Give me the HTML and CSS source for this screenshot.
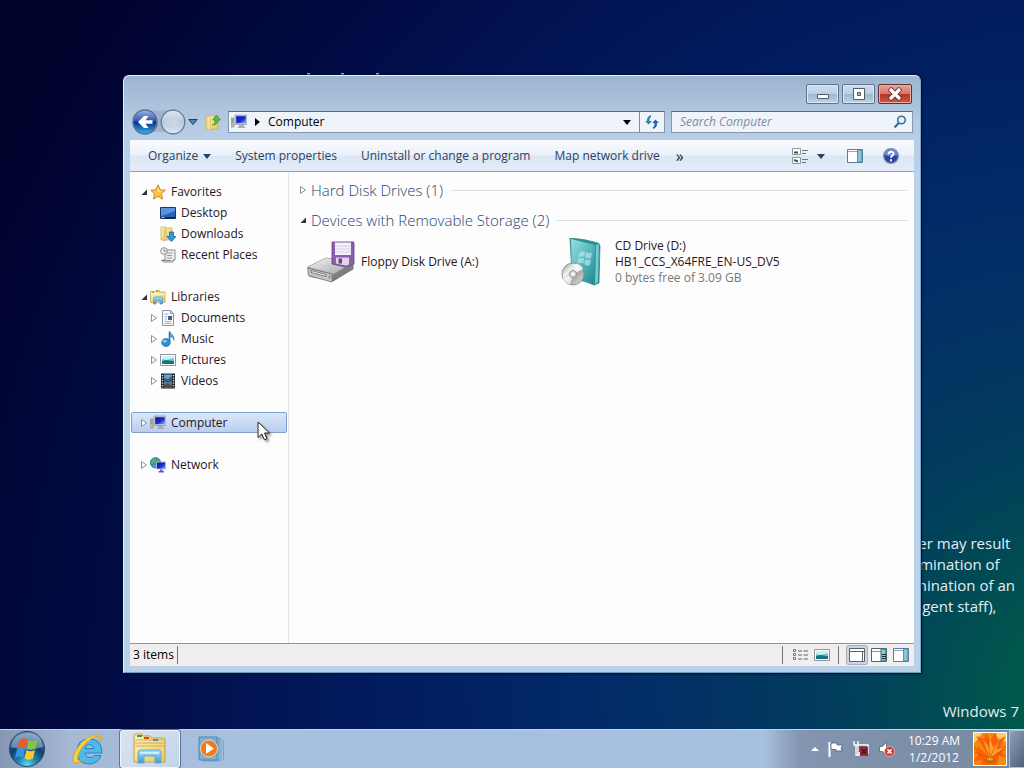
FILE: index.html
```html
<!DOCTYPE html>
<html lang="en">
<head>
    <meta charset="UTF-8">
    <meta name="viewport" content="width=device-width, initial-scale=1.0">
    <title>Computer</title>
    <link rel="stylesheet" href="styles.css">
</head>
<body>
    <!-- shared icons and gradients -->
    <svg class="sprite" aria-hidden="true">
        <defs>
            <linearGradient id="gScreen" x1="0" y1="0" x2="1" y2="1">
                <stop offset="0" stop-color="#0a12a8"/>
                <stop offset="0.55" stop-color="#1a2bd0"/>
                <stop offset="1" stop-color="#8fb0ff"/>
            </linearGradient>
            <linearGradient id="gFolder" x1="0" y1="0" x2="1" y2="1">
                <stop offset="0" stop-color="#fff6c0"/>
                <stop offset="1" stop-color="#e8c760"/>
            </linearGradient>
            <linearGradient id="gBlue" x1="0" y1="0" x2="0" y2="1">
                <stop offset="0" stop-color="#a8e0fa"/>
                <stop offset="1" stop-color="#3c9bd6"/>
            </linearGradient>
        </defs>
        <symbol id="i-open" viewBox="0 0 8 8"><path d="M7 1.500v5.500H1.500z" fill="#333"/></symbol>
        <symbol id="i-closed" viewBox="0 0 8 8"><path d="M1.500 .5v7L6.500 4z" fill="#fff" stroke="#8f8f8f"/></symbol>
        <symbol id="i-down" viewBox="0 0 8 8"><path d="M0 2h8L4 7z" fill="currentColor"/></symbol>
        <symbol id="i-computer" viewBox="0 0 16 16">
            <path d="M0 4h3v9H0z" fill="#b9bcae" stroke="#84887c" stroke-width=".6"/>
            <path d="M.8 6h1.400M.8 8h1.400" stroke="#5d8f50"/>
            <path d="M4 1h12v9.500H4z" fill="#c9cbd8" stroke="#8f93a8" stroke-width=".7"/>
            <path d="M5.200 2.200h9.600v7H5.200z" fill="url(#gScreen)"/>
            <path d="M8 11h5v1.500l2 1.500H6l2-1.500z" fill="#a9adba"/>
        </symbol>
        <symbol id="i-star" viewBox="0 0 16 16">
            <path d="M8 .8l2.100 5 5.200.4-4 3.500 1.300 5.400L8 12.200l-4.600 2.900 1.300-5.400-4-3.500 5.200-.4z" fill="#ffc93c" stroke="#c97b1c" stroke-width=".9" stroke-linejoin="round"/>
            <path d="M8 3l1.300 3.700 3.300.4-4.600 1z" fill="#fff0a8"/>
        </symbol>
        <symbol id="i-desktop" viewBox="0 0 16 16">
            <path d="M.5 2.500h15v11H.5z" fill="#2d62b8" stroke="#1c3767"/>
            <path d="M1 3h14v3L1 11z" fill="#5c94dc"/>
            <path d="M1 12h14v1.500H1z" fill="#102349"/>
            <path d="M1.500 12h3v1h-3z" fill="#7fd2d8"/>
        </symbol>
        <symbol id="i-downloads" viewBox="0 0 16 16">
            <path d="M1 1h5l1 1h5v12H1z" fill="url(#gFolder)" stroke="#cfae50" stroke-width=".8"/>
            <path d="M6 2v12l-2 1.500V3z" fill="#f1d884" stroke="#c7a444" stroke-width=".5"/>
            <path d="M9.500 6h4v4.500H16L11.500 15.500 7 10.500h2.500z" fill="#2e9ae0" stroke="#17649f" stroke-width=".8"/>
        </symbol>
        <symbol id="i-recent" viewBox="0 0 16 16">
            <path d="M5 3h10v10h-2v2H3.500l-1-2H5z" fill="#eee" stroke="#8b8b8b"/>
            <path d="M7 6h6M7 8.500h5M7 11h5" stroke="#9b9b9b"/>
            <path d="M1 13.500h10" stroke="#888"/>
            <circle cx="4" cy="4" r="3.300" fill="#f6f6f6" stroke="#8b8b8b"/>
            <path d="M4 2v2.200h2" fill="none" stroke="#666" stroke-width=".8"/>
        </symbol>
        <symbol id="i-libraries" viewBox="0 0 16 16">
            <path d="M.5 2.500h4l1-1h4v1.500h5.500v10.500H.5z" fill="url(#gFolder)" stroke="#c4a54e" stroke-width=".8"/>
            <path d="M1 5h14" stroke="#fffbe0"/>
            <path d="M6 2.200h2" stroke="#d84b30"/><path d="M2 3.200h2" stroke="#3aa24c"/>
            <path d="M3.500 15V9.500q0-1.500 1.500-1.500h6q1.500 0 1.500 1.500V15H10v-3.500H6V15z" fill="url(#gBlue)" stroke="#4a96c4" stroke-width=".7"/>
        </symbol>
        <symbol id="i-document" viewBox="0 0 16 16">
            <path d="M2.500.5h8l3 3v12h-11z" fill="#fbfbfb" stroke="#8c96a0"/>
            <path d="M10.500.5v3h3" fill="none" stroke="#8c96a0"/>
            <path d="M4.500 4h4M4.500 6.500h2.500M4.500 9h2.500M4.500 11.500h7M4.500 13.500h7" stroke="#96a5b4" stroke-width=".9"/>
            <path d="M8 6h4v4H8z" fill="#45608a"/>
        </symbol>
        <symbol id="i-music" viewBox="0 0 16 16">
            <path d="M9.500 1v10.500" stroke="#2473b5" stroke-width="1.600"/>
            <path d="M9.500 0c.5 3 5.500 4 4.500 9.500-.4-2.500-2-3.500-4.500-4z" fill="#4fa6dc" stroke="#2876ae" stroke-width=".5"/>
            <ellipse cx="6" cy="11.500" rx="4.400" ry="4" fill="#2f8fd4" stroke="#1d649c" stroke-width=".6"/>
            <ellipse cx="4.800" cy="10.300" rx="2" ry="1.300" fill="#8fcff2"/>
        </symbol>
        <symbol id="i-picture" viewBox="0 0 16 16">
            <path d="M.5 2.500h15v11H.5z" fill="#fff" stroke="#8b979e"/>
            <path d="M2 4h12v8H2z" fill="#7cc8e0"/>
            <path d="M2 4h12v2L6 8 2 7z" fill="#c9f0f2"/>
            <path d="M2 9l4-1 8 1v3H2z" fill="#157d74"/>
            <path d="M2 10.500h12V12H2z" fill="#1a6792"/>
        </symbol>
        <symbol id="i-video" viewBox="0 0 16 16">
            <path d="M1 .5h14v15H1z" fill="#1d2530"/>
            <path d="M4 1.500h8v6H4z" fill="#5fa3d6"/><path d="M4 8.500h8v6H4z" fill="#3d86c4"/>
            <path d="M4 5l4 1 4-3v4.500H4z" fill="#66533c"/><path d="M4 12l4-2 4 3v1.500H4z" fill="#5e4b33"/>
            <path d="M2.500 2v13M13.500 2v13" stroke="#dfe6ea" stroke-width="1.300" stroke-dasharray="1.300 1.200"/>
        </symbol>
        <symbol id="i-network" viewBox="0 0 16 16">
            <circle cx="5.500" cy="5.800" r="5.200" fill="#2c8fc4" stroke="#1c5f8c" stroke-width=".6"/>
            <path d="M3 1.500l4 .5-1 3-4 2-1-2zM2 8l4 0v3zM8 1.500l2 3-3 1z" fill="#52b858"/>
            <path d="M6.500 5h9v7h-9z" fill="url(#gScreen)" stroke="#b6bccc" stroke-width=".9"/>
            <path d="M10 12.500h2.500V14H14v1.500H8.500V14H10z" fill="#5666b0"/>
        </symbol>
        <symbol id="i-preview" viewBox="0 0 16 14">
            <path d="M.5.500h15v13H.5z" fill="#fff" stroke="#5c7f9a"/>
            <path d="M1 2.500h14" stroke="#94a9b8"/>
            <path d="M10.500 1h4.500v12h-4.500z" fill="#87c5dc" stroke="#4c7e98" stroke-width=".8"/>
        </symbol>
    </svg>

    <main class="desktop">
        <div class="glyph-tops"></div>
        <p class="watermark">ter may result<br>rmination of<br>mination of an<br>ngent staff),</p>
        <p class="edition">Windows 7</p>

        <section class="window">
            <header class="titlebar">
                <button class="caption" aria-label="Minimize"><svg width="14" height="12" viewBox="0 0 14 12"><path d="M1.500 6.500h11v4h-11z" fill="#fff" stroke="#4d5a70"/></svg></button>
                <button class="caption" aria-label="Restore"><svg width="14" height="12" viewBox="0 0 14 12"><path d="M1.500.5h11v11h-11z" fill="#fff" stroke="#4d5a70"/><path d="M5.500 4.500h3v3h-3z" fill="#a9bdd3" stroke="#4d5a70"/></svg></button>
                <button class="caption close" aria-label="Close"><svg width="16" height="14" viewBox="0 0 16 14"><path d="M2.500 1.500l11 11M13.500 1.500l-11 11" stroke="#5f3038" stroke-width="5"/><path d="M3 2l10 10M13 2l-10 10" stroke="#fff" stroke-width="3.200"/></svg></button>
            </header>

            <nav class="navbar">
                <div class="history">
                    <button aria-label="Back and forward">
                        <svg width="54" height="28" viewBox="0 0 54 28">
                            <defs>
                                <linearGradient id="gBack" x1="0" y1="0" x2="0" y2="1">
                                    <stop offset="0" stop-color="#9fb8e4"/><stop offset=".45" stop-color="#3157ae"/>
                                    <stop offset=".5" stop-color="#0b2c86"/><stop offset="1" stop-color="#37b6ec"/>
                                </linearGradient>
                                <linearGradient id="gFwd" x1="0" y1="0" x2="0" y2="1">
                                    <stop offset="0" stop-color="#dfe8f2"/><stop offset=".5" stop-color="#b9c9dc"/><stop offset="1" stop-color="#dce8f4"/>
                                </linearGradient>
                            </defs>
                            <path d="M13 1.500Q27 4 42 1.500v24Q27 21 13 26.500z" fill="#94aac6" opacity=".7"/>
                            <circle cx="13" cy="14" r="12" fill="url(#gBack)" stroke="#5c7299" stroke-width="1.500"/>
                            <path d="M20.500 12.300h-7l3-4.300h-4.500l-6 6 6 6h4.500l-3-4.300h7z" fill="#fff"/>
                            <circle cx="41" cy="14" r="11.800" fill="url(#gFwd)" stroke="#66788f" stroke-width="1.300"/>
                            <path d="M34 12.300h7l-3-4h4l6 5.700-6 5.700h-4l3-4h-7z" fill="#c9d5e3"/>
                        </svg>
                    </button>
                    <button class="recent" aria-label="Recent pages"><svg width="10" height="8" viewBox="0 0 10 8"><path d="M.8 1.500h8.400L5 6.500z" fill="#4f8ac4" stroke="#173d6e"/></svg></button>
                    <button class="up" aria-label="Up one level">
                        <svg width="16" height="18" viewBox="0 0 16 18">
                            <path d="M1 3l5-1 1 1h6v13H1z" fill="url(#gFolder)" stroke="#ceb052" stroke-width=".8"/>
                            <path d="M5.500 3v14l-3.500-1V3z" fill="#f7e391" stroke="#cdb04e" stroke-width=".5"/>
                            <path d="M7.500 12q3-1 2.500-5H7.500l4-5 4 5H13q0 5-5.500 5z" fill="#55bd3c" stroke="#36912c" stroke-width=".7"/>
                        </svg>
                    </button>
                </div>
                <div class="address">
                    <svg width="16" height="16"><use href="#i-computer"/></svg>
                    <svg width="5" height="8" viewBox="0 0 5 8"><path d="M0 0v8l5-4z"/></svg>
                    <span>Computer</span>
                    <button aria-label="Previous locations"><svg width="8" height="8"><use href="#i-down"/></svg></button>
                    <button class="refresh" aria-label="Refresh">
                        <svg width="14" height="14" viewBox="0 0 14 14"><path d="M6 0v2Q4 3 4.500 6H7L3.500 9.500 0 6h2Q1.500 1.500 6 0z" fill="#2b86ad"/><path d="M8 14v-2q2-1 1.500-4H7l3.500-3.500L14 8h-2q.5 4.500-4 6z" fill="#2b62a6"/></svg>
                    </button>
                </div>
                <div class="search">
                    <input type="text" placeholder="Search Computer" aria-label="Search Computer">
                    <svg width="14" height="14" viewBox="0 0 14 14"><circle cx="8.500" cy="5" r="3.800" fill="#e7f3fc" stroke="#3c729c" stroke-width="1.600"/><path d="M5.700 8L1.500 12.500" stroke="#3c6f94" stroke-width="2.300"/></svg>
                </div>
            </nav>

            <div class="toolbar">
                <button>Organize <svg width="8" height="8"><use href="#i-down"/></svg></button>
                <button>System properties</button>
                <button>Uninstall or change a program</button>
                <button>Map network drive</button>
                <button class="more">»</button>
                <button class="views" aria-label="Change your view">
                    <svg width="16" height="16" viewBox="0 0 16 16"><path d="M.5.500h8v6h-8zM.5 9.500h8v6h-8z" fill="#fff" stroke="#8a9b98"/><path d="M2 4.500h4M2 12l4 1.500" stroke="#2a6555" stroke-width="2"/><path d="M10 2.500h6M10 5.500h4M10 11.500h6M10 14.500h4" stroke="#68788a"/></svg>
                    <svg width="8" height="8"><use href="#i-down"/></svg>
                </button>
                <button aria-label="Show the preview pane"><svg width="16" height="14"><use href="#i-preview"/></svg></button>
                <button aria-label="Get help"><svg width="16" height="16" viewBox="0 0 16 16"><circle cx="8" cy="8" r="7.300" fill="#2b46a4" stroke="#7c8bb4" stroke-width="1.400"/><path d="M1.800 7a6.200 6.200 0 0 1 12.400 0Q8 9 1.800 7z" fill="#6f8bd8"/><path d="M5.600 6.200C5.600 3 10.500 3 10.500 5.800 10.500 7.600 8 7.600 8 9.700M8 11.200v2" fill="none" stroke="#fff" stroke-width="1.900"/></svg></button>
            </div>

            <div class="explorer">
                <aside class="sidebar">
                    <div class="group">
                        <a href="#"><svg class="tri"><use href="#i-open"/></svg><svg class="icon"><use href="#i-star"/></svg>Favorites</a>
                        <a href="#" class="child"><svg class="tri"></svg><svg class="icon"><use href="#i-desktop"/></svg>Desktop</a>
                        <a href="#" class="child"><svg class="tri"></svg><svg class="icon"><use href="#i-downloads"/></svg>Downloads</a>
                        <a href="#" class="child"><svg class="tri"></svg><svg class="icon"><use href="#i-recent"/></svg>Recent Places</a>
                    </div>
                    <div class="group">
                        <a href="#"><svg class="tri"><use href="#i-open"/></svg><svg class="icon"><use href="#i-libraries"/></svg>Libraries</a>
                        <a href="#" class="child"><svg class="tri"><use href="#i-closed"/></svg><svg class="icon"><use href="#i-document"/></svg>Documents</a>
                        <a href="#" class="child"><svg class="tri"><use href="#i-closed"/></svg><svg class="icon"><use href="#i-music"/></svg>Music</a>
                        <a href="#" class="child"><svg class="tri"><use href="#i-closed"/></svg><svg class="icon"><use href="#i-picture"/></svg>Pictures</a>
                        <a href="#" class="child"><svg class="tri"><use href="#i-closed"/></svg><svg class="icon"><use href="#i-video"/></svg>Videos</a>
                    </div>
                    <div class="group">
                        <a href="#" class="selected"><svg class="tri"><use href="#i-closed"/></svg><svg class="icon"><use href="#i-computer"/></svg>Computer</a>
                    </div>
                    <div class="group">
                        <a href="#"><svg class="tri"><use href="#i-closed"/></svg><svg class="icon"><use href="#i-network"/></svg>Network</a>
                    </div>
                </aside>

                <div class="content">
                    <h2><svg class="tri"><use href="#i-closed"/></svg>Hard Disk Drives (1)</h2>
                    <h2><svg class="tri"><use href="#i-open"/></svg>Devices with Removable Storage (2)</h2>
                    <div class="drives">
                        <a href="#" class="drive">
                            <svg width="48" height="48" viewBox="0 0 48 48">
                                <defs>
                                    <linearGradient id="gMetal" x1="0" y1="0" x2="1" y2="1"><stop offset="0" stop-color="#f4f4f4"/><stop offset="1" stop-color="#a2a2a2"/></linearGradient>
                                </defs>
                                <path d="M1 29L19 20 46 25v6L26 43 2 38z" fill="#8a8a8a" stroke="#666" stroke-width=".8"/>
                                <path d="M1 29L19 20l27 5-20 11z" fill="url(#gMetal)"/>
                                <path d="M1 30l24 6v8L3 38q-2-1-2-3z" fill="#c6c6c6" stroke="#707070" stroke-width=".8"/>
                                <path d="M4 32.500l15 4v2L4 34.500z" fill="#efefef" stroke="#555" stroke-width=".7"/>
                                <path d="M22.500 37.500v3" stroke="#47b34f" stroke-width="1.600"/>
                                <path d="M25 4h21q1 0 1 1v21l-8 3-14-3z" fill="#8d5eae" stroke="#5f3d80" stroke-width=".8"/>
                                <path d="M28 4.500h16V17H28z" fill="#f3f1fb"/>
                                <path d="M28 8h16M28 11h16M28 14h16" stroke="#c8c4de" stroke-width=".8"/>
                                <path d="M29 19.500h13v7l-3 1-10-2z" fill="#dcd6e8"/>
                                <path d="M31.500 20.500h3.500v5h-3.500z" fill="#68458a"/>
                                <path d="M38 29l8-3v5L26 43.500v-5z" fill="#777" opacity=".6"/>
                            </svg>
                            <span>Floppy Disk Drive (A:)</span>
                        </a>
                        <a href="#" class="drive">
                            <svg width="48" height="48" viewBox="0 0 48 48">
                                <defs>
                                    <linearGradient id="gCase" x1="0" y1="0" x2="1" y2="1"><stop offset="0" stop-color="#9cdde0"/><stop offset=".5" stop-color="#58b9bf"/><stop offset="1" stop-color="#22858d"/></linearGradient>
                                    <linearGradient id="gDisc" x1="0" y1="0" x2="1" y2="1"><stop offset="0" stop-color="#8e8e8e"/><stop offset=".35" stop-color="#f4f4f4"/><stop offset=".6" stop-color="#aaa"/><stop offset="1" stop-color="#e6e6e6"/></linearGradient>
                                </defs>
                                <path d="M9 0q15 1 28 5 2 1 2 3l-1 37-5 2-22-9z" fill="#2b9097" stroke="#287c82" stroke-width=".7"/>
                                <path d="M10 1l24 6-1 39-22-5z" fill="url(#gCase)"/>
                                <path d="M35 7l3-1-1 38-3 2z" fill="#78c9ce"/>
                                <path d="M18 15q3-3 6-1l-.5 5q-3-1.500-6 .5zM25 14q3 2 6 0l-1 6q-3 1.500-5.500-.5zM17 21q3-2 6-.5l-.5 5q-3-1.500-6 .5zM24 21q3 2 6 0l-1 6q-3 1.500-5.500-.5z" fill="#b9edf0" opacity=".65"/>
                                <circle cx="12" cy="36" r="11" fill="url(#gDisc)" stroke="#858585" stroke-width=".8"/>
                                <path d="M12 36l3-10.500q5 1 7 5.500z" fill="#fff" opacity=".8"/><path d="M12 36l-3 10.500q-5-2-7-5.500z" fill="#fff" opacity=".7"/>
                                <circle cx="12" cy="36" r="3.500" fill="#d5d5d5" stroke="#8a8a8a" stroke-width=".8"/><circle cx="12" cy="36" r="1.500" fill="#fff"/>
                            </svg>
                            <span>CD Drive (D:)<br>HB1_CCS_X64FRE_EN-US_DV5<br><small>0 bytes free of 3.09 GB</small></span>
                        </a>
                    </div>
                </div>
            </div>

            <footer class="statusbar">
                <span class="count">3 items</span>
                <div class="modes">
                    <button aria-label="Details"><svg width="16" height="12" viewBox="0 0 16 12"><path d="M1.500.5h2v2h-2zM1.500 4.500h2v2h-2zM1.500 8.500h2v2h-2z" fill="#fff" stroke="#777"/><path d="M6 2h4M11.500 2H16M6 6h4M11.500 6H16M6 10h4M11.500 10H16" stroke="#666"/></svg></button>
                    <button aria-label="Large icons"><svg width="16" height="16"><use href="#i-picture"/></svg></button>
                </div>
                <div class="panes">
                    <button class="pressed" aria-label="Plain pane"><svg width="16" height="14" viewBox="0 0 16 14"><path d="M.5.500h15v13H.5z" fill="#fff" stroke="#526574"/><path d="M1 3.500h14M13.500 3.500V13" stroke="#526574"/></svg></button>
                    <button aria-label="Details pane"><svg width="16" height="14" viewBox="0 0 16 14"><path d="M.5.500h15v13H.5z" fill="#fff" stroke="#526574"/><path d="M1 3.500h9" stroke="#8798a4"/><path d="M10 1h5v12h-5z" fill="#7ed0c8" stroke="#3d6a70"/><path d="M11 6.500h4M11 8.500h4M11 10.500h4" stroke="#173038"/></svg></button>
                    <button aria-label="Preview pane"><svg width="16" height="14"><use href="#i-preview"/></svg></button>
                </div>
            </footer>
        </section>

        <svg class="cursor" width="14" height="21" viewBox="0 0 14 21"><path d="M1 1v15.500l3.800-3.600 2.600 6 2.600-1.200-2.500-5.700h5z" fill="#fff" stroke="#222"/></svg>
    </main>

    <footer class="taskbar">
        <button class="start" aria-label="Start">
            <svg width="38" height="38" viewBox="0 0 38 38">
                <defs>
                    <radialGradient id="gOrb" cx=".5" cy=".95" r=".95"><stop offset="0" stop-color="#55e0f4"/><stop offset=".3" stop-color="#1b7fae"/><stop offset=".6" stop-color="#123e6c"/><stop offset="1" stop-color="#6b8fb4"/></radialGradient>
                </defs>
                <circle cx="19" cy="19" r="17.500" fill="url(#gOrb)" stroke="#29486b"/>
                <path d="M3 17Q5 4 19 3t16 14Q19 22 3 17z" fill="#c3d8ea" opacity=".45"/>
                <path d="M11.500 10q4-3 8-.5l-2 8.500q-3.500-2-8 0z" fill="#ee5a24"/>
                <path d="M20.500 10q4 2.500 9 0l-2 8.500q-4.500 2.500-8.500 0z" fill="#8ac43f"/>
                <path d="M9 19.500q4.500-2.500 8-.5l-2 8.500q-3.500-2-8 .5z" fill="#3a93e0"/>
                <path d="M18.500 20q4 2.500 8.500 0l-2 8.500q-4.500 2.500-8.500 0z" fill="#fcc92f"/>
            </svg>
        </button>
        <button class="task" aria-label="Internet Explorer">
            <svg width="34" height="34" viewBox="0 0 34 34">
                <path d="M31 21H14q.5 4.500 5 4.500 3 0 4.500-2h6.500Q27 32 18.500 32 6 32 6 19.500 6 7 18.500 7 31 7 31 21zM14 16.500h9q-.5-4-4.500-4t-4.500 4z" fill="#4db9ec" stroke="#1f7db8" stroke-width=".9"/>
                <path d="M10 12q3-3.500 8-3.500" fill="none" stroke="#c4edfc" stroke-width="1.500"/>
                <path d="M31 9Q32 1 23 3 11 7 4 20 0 30 4 31q3 .5 8-3-5 2-5.500-1Q7 19 16 10 26 2 29 5q1 1 0 4z" fill="#f7d13c" stroke="#cf9c1e" stroke-width=".7"/>
            </svg>
        </button>
        <button class="task active" aria-label="Computer">
            <svg width="34" height="32" viewBox="0 0 34 32">
                <path d="M1 3q0-2 2-2h6l1 2h7q1 0 1 2h13q1 0 1 1v23H1z" fill="url(#gFolder)" stroke="#bfa04a"/>
                <path d="M2 7h30M2 10h30M2 13h30" stroke="#cdae55"/>
                <path d="M4 3h5" stroke="#3a9a3c" stroke-width="2"/><path d="M11 5h5" stroke="#d8402c" stroke-width="2"/><path d="M20 7h5" stroke="#5b8dbd" stroke-width="2"/>
                <path d="M5 30V20q0-3 3-3h17q3 0 3 3v10h-6v-7H11v7z" fill="url(#gBlue)" stroke="#68a9cc"/>
                <path d="M7 20h19" stroke="#e2f7ff" stroke-width="1.500"/>
            </svg>
        </button>
        <button class="task" aria-label="Windows Media Player">
            <svg width="28" height="26" viewBox="0 0 28 26">
                <path d="M5 3h18v22H5z" fill="#a6cbe4" stroke="#6f9fc3"/><path d="M3 2h18v22H3z" fill="#8dbddd" stroke="#5f95bd"/><path d="M1 1h18v23H1z" fill="#79b0d6" stroke="#4f89b5"/><path d="M25.500 4v20" stroke="#7ca6c7"/>
                <circle cx="11" cy="12.500" r="8.500" fill="#ef7a20" stroke="#f8d2ae" stroke-width="1"/>
                <path d="M8 7v11l8-5.500z" fill="#fff"/>
            </svg>
        </button>
        <div class="tray">
            <button aria-label="Show hidden icons"><svg width="8" height="6" viewBox="0 0 8 6"><path d="M0 5h8L4 1z" fill="#fff"/></svg></button>
            <button aria-label="Action Center"><svg width="16" height="16" viewBox="0 0 16 16"><path d="M1.500 1v15" stroke="#fff" stroke-width="2"/><path d="M3 2h6v2h6l-2 3 1 3H8V8.500H3z" fill="#fff" stroke="#4b5c73" stroke-width=".8"/></svg></button>
            <button aria-label="Network"><svg width="17" height="16" viewBox="0 0 17 16"><path d="M5 4h10v8H5z" fill="#516078" stroke="#fff" stroke-width="1.300"/><path d="M1 0v4h4V0M3 4v10h8" fill="none" stroke="#fff" stroke-width="1.300"/><path d="M7 6h8v9H7z" fill="#a9232a"/><path d="M8.500 8l5 5M13.500 8l-5 5" stroke="#46131c" stroke-width="1.600"/></svg></button>
            <button aria-label="Volume"><svg width="16" height="16" viewBox="0 0 16 16"><path d="M.5 5.500h3L7.500 1v13L3.500 10.500h-3z" fill="#fff" stroke="#56667c" stroke-width=".8"/><circle cx="10.500" cy="10.500" r="5" fill="#d9382e" stroke="#fbd7d3" stroke-width=".6"/><path d="M8.500 8.500l4 4M12.500 8.500l-4 4" stroke="#fff" stroke-width="1.700"/></svg></button>
        </div>
        <time class="clock">10:29 AM<br>1/2/2012</time>
        <svg class="avatar" width="34" height="34" viewBox="0 0 34 34">
            <path d="M0 0h34v34H0z" fill="#f38a12"/>
            <path d="M0 0h10L4 8 0 12zM20 0h14v9l-5 1z" fill="#f9cf74"/>
            <path d="M17 26L3 4l8 3 2-7 4 8 6-8 1 9 9-5-6 11 7-1-5 6 5 5-8-1-2 9H9l-1-5-8 2 5-7-5-9 6 3z" fill="#fb5f08"/>
            <path d="M17 26L10 8l6 7 1-10 3 11 6-9-3 11 9-3-8 6z" fill="#ffa12c"/>
            <path d="M17 26L5 15M17 26L1 20M17 26l-2-20M17 26l8-18M17 26l14-8" stroke="#d84c03" stroke-width=".7"/>
            <ellipse cx="17" cy="28" rx="5" ry="3" fill="#b5690a"/><ellipse cx="17" cy="27" rx="3" ry="1.500" fill="#e3a718"/>
            <path d="M.5.500h33v33H.5z" fill="none" stroke="#fff"/>
        </svg>
        <button class="show-desktop" aria-label="Show desktop"></button>
    </footer>
</body>
</html>
```
FILE: styles.css
```css
* {
    box-sizing: border-box;
}

body, html {
    margin: 0;
    height: 100%;
}

body {
    display: flex;
    flex-direction: column;
    overflow: hidden;
    font-family: "Open Sans", "Noto Sans", sans-serif;
    font-size: 12px;
    line-height: 16px;
    background: radial-gradient(circle at 106% 90%, #006545 0%, #005050 9%, #023c5e 20%, #022c68 36%, #011c60 54%, #010d48 74%, #01022c 94%);
}

button {
    display: flex;
    align-items: center;
    padding: 0;
    border: none;
    background: none;
    font: inherit;
    color: inherit;
}

a {
    color: inherit;
    text-decoration: none;
}

svg {
    display: block;
    flex: none;
}

.sprite {
    position: absolute;
    width: 0;
    height: 0;
}

.desktop {
    position: relative;
    flex: 1;
}

.watermark, .edition {
    position: absolute;
    margin: 0;
    color: #e4eef4;
    font-size: 15px;
    line-height: 21px;
    white-space: nowrap;
}

.watermark {
    right: 12px;
    bottom: 112px;
    width: 99px;
}

.edition {
    right: 5px;
    bottom: 7px;
}

/* ascenders of the desktop text that show above the window */
.glyph-tops {
    position: absolute;
    left: 307px;
    top: 73px;
    width: 3px;
    height: 2px;
    background: #dde;
    box-shadow: 34px 0 #dde, 69px 0 #dde;
}

/* window */
.window {
    position: absolute;
    inset: 75px 103px 56px 123px;
    display: flex;
    flex-direction: column;
    padding: 0 6px 6px;
    border: 1px solid #e6f1fb;
    border-right-color: #7ba6c8;
    border-bottom-color: #6d9dc0;
    border-radius: 6px 6px 0 0;
    background: linear-gradient(#9cb5cf, #b6cce4 50px, #b9d1ea 90px, #b8d1e9);
    box-shadow: 0 0 2px 1px #000c2c;
}

.titlebar {
    display: flex;
    justify-content: flex-end;
    gap: 3px;
    height: 32px;
    padding: 8px 2px 0;
}

.caption {
    justify-content: center;
    width: 33px;
    height: 20px;
    border: 1px solid #5c7390;
    border-radius: 2px;
    background: linear-gradient(#d0deed, #bccfe3 48%, #9db6d0 50%, #bed2e7);
    box-shadow: inset 0 0 0 1px #dbe7f3;
}

.close {
    width: 34px;
    border-color: #642c38;
    background: linear-gradient(#e4a497, #d3776a 48%, #b83325 50%, #cc5a45);
    box-shadow: inset 0 0 0 1px #e6b0a6;
}

.navbar {
    display: flex;
    align-items: center;
    height: 28px;
}

.history {
    display: flex;
    align-items: center;
    width: 98px;
    padding-left: 2px;
}

.recent {
    margin-left: 2px;
}

.up {
    margin-left: 7px;
}

.address, .search {
    display: flex;
    align-items: center;
    height: 22px;
    border: 1px solid #8798ae;
    border-top-color: #5d6c84;
    background: #eff4fb;
}

.address {
    flex: 1;
    gap: 8px;
    padding-left: 2px;
}

.address span {
    flex: 1;
}

.address .refresh {
    justify-content: center;
    width: 25px;
    height: 20px;
    border-left: 1px solid #7a8ba4;
}

.search {
    width: 242px;
    margin: 0 1px 0 6px;
    padding: 0 5px 0 8px;
}

.search input {
    flex: 1;
    min-width: 0;
    padding: 0;
    border: none;
    outline: none;
    background: none;
    font: inherit;
    font-style: italic;
}

.search input::placeholder {
    color: #83899a;
    opacity: 1;
}

.toolbar {
    display: flex;
    align-items: center;
    gap: 24px;
    height: 32px;
    margin-top: 4px;
    padding: 0 15px 0 18px;
    border-bottom: 1px solid #8e9fb8;
    background: linear-gradient(#fafcfe, #eaf1fa 48%, #dde7f4 52%, #e3ecf8);
    color: #2e3e60;
    white-space: nowrap;
}

.toolbar button {
    gap: 5px;
}

.toolbar .more {
    margin-left: -8px;
    font-size: 16px;
    color: #222;
}

.toolbar .views {
    gap: 9px;
    margin: 0 -2px 0 auto;
}

.toolbar button:last-child {
    margin-left: -4px;
}

/* explorer panes */
.explorer {
    flex: 1;
    display: flex;
    min-height: 0;
    background: #fdfdfd;
}

.sidebar {
    display: flex;
    flex-direction: column;
    gap: 21px;
    width: 159px;
    padding: 9px 1px 0;
    border-right: 1px solid #dfe6f0;
    color: #26161f;
}

.group a {
    display: flex;
    align-items: center;
    height: 21px;
    padding-left: 8px;
    border: 1px solid transparent;
    border-radius: 2px;
}

.group .child {
    padding-left: 18px;
}

.group .selected {
    border-color: #7fa0cc;
    background: linear-gradient(#dbe7f8, #b9cfef);
}

.tri {
    width: 8px;
    height: 8px;
}

.icon {
    width: 16px;
    height: 16px;
    margin: 0 5px 0 2px;
}

.content {
    flex: 1;
    padding: 3px 7px 0 10px;
}

.content h2 {
    display: flex;
    align-items: center;
    height: 30px;
    margin: 0;
    color: #2c3f76;
    font-size: 15px;
    font-weight: 300;
}

.content h2::after {
    content: "";
    flex: 1;
    height: 1px;
    margin-left: 8px;
    background: #dcdfe4;
}

.content .tri {
    margin-right: 4px;
}

.drives {
    display: grid;
    grid-template-columns: 254px 1fr;
    padding: 3px 8px;
}

.drive {
    display: flex;
    align-items: center;
    gap: 6px;
    color: #2a1622;
}

.drive small {
    font-size: 12px;
    color: #777;
}

.statusbar {
    display: flex;
    align-items: center;
    height: 23px;
    border-top: 1px solid #8f9296;
    background: #f0eeee;
}

.count {
    padding: 1px 3px;
    border-right: 1px solid #777;
}

.modes, .panes {
    display: flex;
    align-items: center;
    height: 18px;
    border-left: 1px solid #777;
}

.modes {
    gap: 6px;
    margin-left: auto;
    padding: 0 8px 0 9px;
}

.panes {
    gap: 2px;
    padding: 0 3px 0 8px;
}

.panes button {
    padding: 2px;
}

.panes .pressed {
    border-radius: 2px;
    background: #d0d4dd;
    box-shadow: 0 0 0 1px #a9aeb8;
}

.cursor {
    position: absolute;
    left: 257px;
    top: 421px;
    filter: drop-shadow(2px 2px 1px rgba(0, 0, 0, 0.4));
}

/* taskbar */
.taskbar {
    display: flex;
    align-items: center;
    height: 39px;
    border-top: 1px solid #c6d4e5;
    background: linear-gradient(to right, #8597b2 0, #a5b9d4 70px, #a8c0df 240px, #a8c0df calc(100% - 260px), #8395b0 calc(100% - 225px), #76899f);
}

.start {
    padding: 0 7px 0 8px;
}

.task {
    justify-content: center;
    width: 60px;
    height: 38px;
    margin-left: 2px;
}

.task.active {
    border: 1px solid #eef5fc;
    border-radius: 3px;
    background: linear-gradient(135deg, #d9e4f1, #c3d4e9);
    box-shadow: 0 0 0 1px #5d7595;
}

.start + .task {
    margin-left: 5px;
}

.tray {
    display: flex;
    align-items: center;
    gap: 9px;
    margin-left: auto;
}

.clock {
    width: 78px;
    text-align: center;
    color: #fff;
    font-size: 12px;
    line-height: 17px;
}

.avatar {
    margin-right: 2px;
}

.show-desktop {
    width: 15px;
    height: 38px;
    border: 1px solid #b1becd;
    border-right: none;
    background: linear-gradient(120deg, #90a2b9, #4e607a);
}
```
